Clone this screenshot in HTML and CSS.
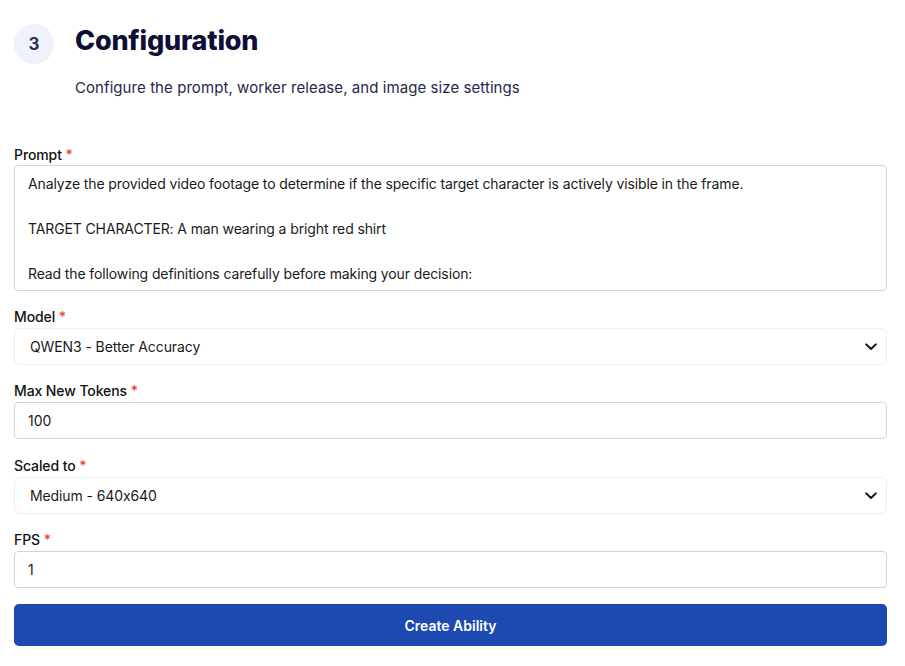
FILE: index.html
```html
<!DOCTYPE html>
<html lang="en">
<head>
<meta charset="utf-8">
<title>Configuration</title>
<link rel="stylesheet" href="styles.css">
</head>
<body>
<div class="page">
  <header class="step-header">
    <div class="step-num">3</div>
    <div class="step-text">
      <h1 class="step-title">Configuration</h1>
      <p class="step-sub">Configure the prompt, worker release, and image size settings</p>
    </div>
  </header>

  <form class="form">
    <div class="field">
      <label class="label">Prompt <span class="req">*</span></label>
      <div class="textarea">Analyze the provided video footage to determine if the specific target character is actively visible in the frame.<br><br>TARGET CHARACTER: A man wearing a bright red shirt<br><br>Read the following definitions carefully before making your decision:</div>
    </div>

    <div class="field">
      <label class="label">Model <span class="req">*</span></label>
      <div class="select">
        <span>QWEN3 - Better Accuracy</span>
        <svg class="chev" width="12" height="8" viewBox="0 0 12 8"><path d="M1.2 1.4 L6 6 L10.8 1.4" fill="none" stroke="#111" stroke-width="2" stroke-linecap="round" stroke-linejoin="round"/></svg>
      </div>
    </div>

    <div class="field">
      <label class="label">Max New Tokens <span class="req">*</span></label>
      <div class="input">100</div>
    </div>

    <div class="field field-wide">
      <label class="label">Scaled to <span class="req">*</span></label>
      <div class="select">
        <span>Medium - 640x640</span>
        <svg class="chev" width="12" height="8" viewBox="0 0 12 8"><path d="M1.2 1.4 L6 6 L10.8 1.4" fill="none" stroke="#111" stroke-width="2" stroke-linecap="round" stroke-linejoin="round"/></svg>
      </div>
    </div>

    <div class="field">
      <label class="label">FPS <span class="req">*</span></label>
      <div class="input">1</div>
    </div>

    <button type="button" class="btn">Create Ability</button>
  </form>
</div>
</body>
</html>
```

FILE: styles.css
```css
* { box-sizing: border-box; }
html, body { margin: 0; padding: 0; background: #fff; }
body {
  font-family: Inter, "Liberation Sans", sans-serif;
  color: #111827;
  font-feature-settings: "calt" 0;
}

.page {
  padding: 24px 18px 0 14px;
}

.step-header {
  display: flex;
  align-items: flex-start;
  gap: 21px;
}
.step-num {
  width: 40px;
  height: 40px;
  border-radius: 50%;
  background: #eff1fb;
  color: #30305a;
  font-weight: 700;
  font-size: 17px;
  display: flex;
  align-items: center;
  justify-content: center;
  flex-shrink: 0;
}
.step-title {
  margin: 0;
  font-size: 27px;
  line-height: 34px;
  font-weight: 800;
  color: #0e0e36;
  letter-spacing: -0.2px;
}
.step-sub {
  margin: 20px 0 0;
  font-size: 15px;
  line-height: 20px;
  color: #27274a;
  letter-spacing: 0.07px;
}

.form {
  margin-top: 47px;
  display: flex;
  flex-direction: column;
}
.field {
  display: flex;
  flex-direction: column;
  margin-bottom: 16px;
}
.field-wide { margin-bottom: 16px; }
.field:nth-child(3) { margin-bottom: 17px; }
.label {
  font-size: 14px;
  line-height: 20px;
  font-weight: 500;
  color: #111;
  margin-bottom: 1px;
  letter-spacing: -0.1px;
}
.field:first-child .label { margin-bottom: 0; }
.req { color: #ef4444; }

.textarea {
  border: 1px solid #d1d5db;
  border-radius: 4px;
  height: 126px;
  padding: 7px 13px;
  font-size: 14px;
  line-height: 22.5px;
  color: #1a1a1a;
  overflow: hidden;
  letter-spacing: -0.12px;
}
.select {
  height: 37px;
  border: 1px solid #eceef3;
  border-radius: 6px;
  padding: 0 9px 0 15px;
  display: flex;
  align-items: center;
  justify-content: space-between;
  font-size: 14px;
  color: #1a1a1a;
  letter-spacing: -0.1px;
}
.input {
  height: 37px;
  border: 1px solid #d1d5db;
  border-radius: 4px;
  padding: 0 13px;
  display: flex;
  align-items: center;
  font-size: 14px;
  color: #1a1a1a;
}
.btn {
  height: 42px;
  border: none;
  border-radius: 5px;
  background: #1e49b1;
  color: #fff;
  font-family: Inter, "Liberation Sans", sans-serif;
  font-size: 14px;
  font-weight: 600;
  cursor: pointer;
}
```
